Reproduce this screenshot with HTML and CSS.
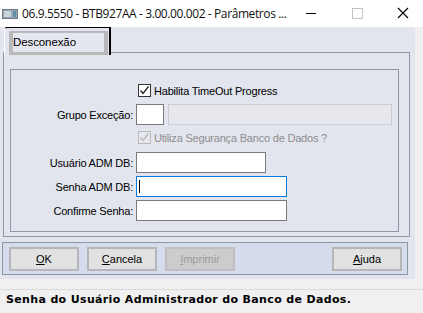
FILE: index.html
```html
<!DOCTYPE html>
<html lang="pt">
<head>
<meta charset="utf-8">
<title>Parâmetros</title>
<link rel="stylesheet" href="styles.css">
</head>
<body>
<div class="window">
  <div class="titlebar">
    <svg class="app-icon" width="16" height="10" viewBox="0 0 16 10">
      <rect x="0.5" y="0.5" width="15" height="9" fill="#9aa6b2" stroke="#6d7882"/>
      <rect x="2" y="2" width="7" height="6" fill="#c9d3dc"/>
      <rect x="11" y="2" width="3" height="6" fill="#5f8fa8"/>
    </svg>
    <span class="title">06.9.5550 - BTB927AA - 3.00.00.002 - Parâmetros ...</span>
    <div class="controls">
      <svg class="ctrl" width="46" height="27" viewBox="0 0 46 27"><line x1="18" y1="13.5" x2="28" y2="13.5" stroke="#000" stroke-width="1"/></svg>
      <svg class="ctrl" width="46" height="27" viewBox="0 0 46 27"><rect x="18.5" y="8.5" width="10" height="10" fill="none" stroke="#c4c4c4"/></svg>
      <svg class="ctrl" width="46" height="27" viewBox="0 0 46 27"><path d="M18 8 L28 18 M28 8 L18 18" stroke="#000" stroke-width="1.1"/></svg>
    </div>
  </div>
  <div class="client">
    <div class="panel">
      <div class="tabs">
        <div class="tab"><div class="tab-inner">Desconexão</div></div>
      </div>
      <div class="page">
        <div class="group">
          <div class="row r1">
            <span class="label"></span>
            <label class="check"><span class="box checked"><svg width="11" height="11" viewBox="0 0 11 11"><path d="M1.5 5.5 L4 8.5 L9.5 1.5" fill="none" stroke="#222" stroke-width="1.3"/></svg></span>Habilita TimeOut Progress</label>
          </div>
          <div class="row r2">
            <span class="label">Grupo Exceção:</span>
            <span class="field w-code"></span>
            <span class="field disabled w-desc"></span>
          </div>
          <div class="row r3">
            <span class="label"></span>
            <label class="check off"><span class="box"><svg width="11" height="11" viewBox="0 0 11 11"><path d="M1.5 5.5 L4 8.5 L9.5 1.5" fill="none" stroke="#b8b8b8" stroke-width="1.3"/></svg></span>Utiliza Segurança Banco de Dados ?</label>
          </div>
          <div class="row r4">
            <span class="label">Usuário ADM DB:</span>
            <span class="field w-user"></span>
          </div>
          <div class="row r5">
            <span class="label">Senha ADM DB:</span>
            <span class="field focus w-pass"><span class="caret"></span></span>
          </div>
          <div class="row r6">
            <span class="label">Confirme Senha:</span>
            <span class="field w-pass"></span>
          </div>
        </div>
      </div>
      <div class="buttonbar">
        <button class="btn"><u>O</u>K</button>
        <button class="btn"><u>C</u>ancela</button>
        <button class="btn disabled"><u>I</u>mprimir</button>
        <span class="spacer"></span>
        <button class="btn"><u>A</u>juda</button>
      </div>
    </div>
    <div class="strip"></div>
  </div>
  <div class="status">Senha do Usuário Administrador do Banco de Dados.</div>
</div>
</body>
</html>
```

FILE: styles.css
```css
html, body {
  margin: 0;
  padding: 0;
  background: #f0f0f0;
}
.window {
  width: 423px;
  height: 313px;
  display: flex;
  flex-direction: column;
  overflow: hidden;
  font-family: "Liberation Sans", Arial, sans-serif;
  font-size: 11px;
  color: #000;
}
.titlebar {
  height: 27px;
  background: #fff;
  display: flex;
  align-items: center;
  flex: none;
}
.app-icon {
  margin-left: 2px;
  margin-top: 1px;
  flex: none;
}
.title {
  margin-left: 4px;
  font-family: "Open Sans", "Noto Sans", sans-serif;
  font-size: 12px;
  letter-spacing: -0.4px;
  color: #111;
  flex: 1;
  white-space: nowrap;
}
.controls {
  display: flex;
  margin-right: -3px;
}
.ctrl { display: block; }
.client {
  display: flex;
  height: 252px;
  flex: none;
}
.panel {
  width: 415px;
  background: #e2e5ee;
  display: flex;
  flex-direction: column;
}
.strip {
  flex: 1;
  background: #f0f0f0;
}
.tabs {
  height: 25px;
  display: flex;
  align-items: flex-start;
}
.tab {
  position: relative;
  z-index: 1;
  margin-left: 4px;
  width: 107px;
  height: 28px;
  box-sizing: border-box;
  border-top: 1px solid #000;
  border-left: 1px solid #fff;
  border-right: 2px solid #000;
  border-top-left-radius: 3px;
  background: #e2e5ee;
  padding: 3px 1px 0 4px;
}
.tab-inner {
  height: 100%;
  box-sizing: border-box;
  border-style: solid;
  border-color: #b9b9b9;
  border-width: 2px 4px 3px 4px;
  background: #e4e7ef;
  padding-left: 0;
  line-height: 19px;
  font-size: 11.5px;
  letter-spacing: -0.1px;
}
.page {
  margin-left: 3px;
  width: 407px;
  height: 185px;
  box-sizing: border-box;
  border: 1px solid #8e97a6;
  padding: 16px 0 0 6px;
}
.group {
  width: 389px;
  height: 163px;
  box-sizing: border-box;
  border: 1px solid #8e97a6;
  padding-top: 14px;
  display: flex;
  flex-direction: column;
  letter-spacing: -0.2px;
}
.row {
  display: flex;
  align-items: center;
}
.label {
  width: 122px;
  margin-right: 3px;
  text-align: right;
  white-space: nowrap;
  flex: none;
}
.r1 { height: 13px; }
.r2 { height: 21px; margin-top: 7px; }
.r3 { height: 13px; margin-top: 6px; }
.r4 { height: 21px; margin-top: 8px; }
.r5 { height: 21px; margin-top: 3px; }
.r6 { height: 21px; margin-top: 3px; }
.check {
  display: flex;
  align-items: center;
  margin-left: 2px;
  white-space: nowrap;
}
.check.off { color: #8d8d8d; }
.box {
  width: 13px;
  height: 13px;
  box-sizing: border-box;
  border: 1px solid #333;
  background: #fff;
  margin-right: 3px;
  display: flex;
  align-items: center;
  justify-content: center;
}
.check.off .box {
  border-color: #bcbcbc;
  background: #e6e8ee;
}
.field {
  height: 21px;
  box-sizing: border-box;
  border: 1px solid #7a7a7a;
  background: #fff;
  display: flex;
  align-items: center;
  flex: none;
}
.field.disabled {
  border-color: #cbcdd2;
  background: #e6e8ee;
  margin-left: 4px;
}
.field.focus { border-color: #0078d7; }
.caret {
  width: 1px;
  height: 13px;
  background: #000;
  margin-left: 2px;
}
.w-code { width: 28px; }
.w-desc { width: 224px; }
.w-user { width: 130px; }
.w-pass { width: 151px; }
.buttonbar {
  margin-top: 5px;
  margin-left: 2px;
  width: 406px;
  height: 33px;
  box-sizing: border-box;
  border: 1px solid #8e97a6;
  background: #d5dcec;
  display: flex;
  align-items: flex-start;
  padding: 4px 0 0 6px;
  gap: 8px;
}
.spacer { flex: 1; }
.btn {
  width: 70px;
  height: 24px;
  box-sizing: border-box;
  border: 2px solid #b6b6b6;
  background: #e1e1e1;
  font-family: "Liberation Sans", Arial, sans-serif;
  font-size: 11px;
  color: #000;
  padding: 0;
  margin: 0;
}
.btn:last-child { margin-right: 5px; }
.btn.disabled {
  background: #cccccc;
  border-color: #bfbfbf;
  color: #9c9c9c;
}
.status {
  margin-top: 10px;
  border-top: 1px solid #dadada;
  flex: 1;
  padding-left: 6px;
  font-family: "DejaVu Sans", Verdana, sans-serif;
  font-weight: bold;
  font-size: 11px;
  line-height: 20px;
  letter-spacing: 0.35px;
  white-space: nowrap;
}
```
